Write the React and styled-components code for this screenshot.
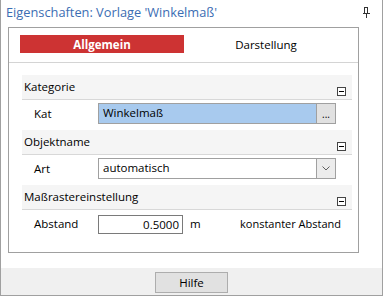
import React from "react";
import styled, { createGlobalStyle } from "styled-components";

const Global = createGlobalStyle`
  html, body { margin: 0; padding: 0; background: #ffffff; }
  body { font-family: "Segoe UI", "Open Sans", "Noto Sans", sans-serif; font-size: 11px; color: #000; }
`;

const Window = styled.div`
  box-sizing: border-box;
  width: 383px;
  height: 296px;
  border: 1px solid #a0a0a0;
  border-top: none;
  display: flex;
  flex-direction: column;
  background: #fff;
`;

const TitleBar = styled.div`
  height: 27px;
  display: flex;
  align-items: flex-start;
  justify-content: space-between;
  padding: 0 12px 0 5px;
`;

const Title = styled.div`
  color: #3b6db3;
  font-size: 12.8px;
  line-height: 16px;
  margin-top: 4px;
`;

const Pin = styled.svg`
  margin-top: 7px;
`;

const Body = styled.div`
  flex: 1;
  padding: 0 23px 15px 7px;
  display: flex;
`;

const Panel = styled.div`
  flex: 1;
  border: 1px solid #a0a0a0;
  display: flex;
  flex-direction: column;
`;

const Tabs = styled.div`
  display: flex;
  padding: 7px 0 0 11px;
  height: 27px;
  border-bottom: 1px solid #d4d4d4;
  box-sizing: content-box;
`;

const Tab = styled.div`
  width: 164px;
  height: 18px;
  display: flex;
  align-items: center;
  justify-content: center;
  background: ${p => (p.$active ? "#cd3333" : "transparent")};
  color: ${p => (p.$active ? "#fff" : "#000")};
  font-weight: ${p => (p.$active ? "700" : "400")};
  font-size: 11.5px;
`;

const Content = styled.div`
  padding: 12px 6px 0 13px;
  display: flex;
  flex-direction: column;
`;

const Header = styled.div`
  height: 22px;
  background: #f5f5f5;
  border-bottom: 1px solid #d8d8d8;
  display: flex;
  align-items: flex-end;
  justify-content: space-between;
  padding: 0 6px 2px 2px;
  box-sizing: content-box;
  font-size: 11.5px;
  line-height: 16px;
`;

const HeaderText = styled.span`
  margin-bottom: 2px;
`;

const Collapse = styled.div`
  width: 7px;
  height: 7px;
  border: 1px solid #444;
  background: #fff;
  position: relative;
  margin-bottom: 1px;
  &::after {
    content: "";
    position: absolute;
    left: 1px;
    right: 1px;
    top: 3px;
    height: 1px;
    background: #000;
  }
`;

const Row = styled.div`
  height: 30px;
  display: flex;
  align-items: flex-start;
  padding-top: 3px;
  box-sizing: border-box;
`;

const Label = styled.div`
  width: 64px;
  padding-left: 12px;
  line-height: 21px;
  font-size: 11.5px;
`;

const Field = styled.div`
  width: 238px;
  height: 21px;
  box-sizing: border-box;
  border: 1px solid #a0a0a0;
  display: flex;
  background: ${p => p.$bg || "#fff"};
`;

const FieldText = styled.div`
  flex: 1;
  padding-left: 4px;
  line-height: 18px;
  font-size: 11.5px;
`;

const SideButton = styled.div`
  width: 18px;
  border-left: 1px solid #a0a0a0;
  background: ${p => p.$bg || "#e1e1e1"};
  display: flex;
  align-items: center;
  justify-content: center;
  font-size: 10px;
  line-height: 18px;
`;

const NumInput = styled.div`
  width: 85px;
  height: 19px;
  box-sizing: border-box;
  border: 1px solid #7a7a7a;
  text-align: right;
  padding-right: 3px;
  line-height: 17px;
  margin-top: 2px;
  font-size: 11.5px;
`;

const Unit = styled.div`
  margin-left: 7px;
  width: 50px;
  line-height: 22px;
  font-size: 11.5px;
`;

const Note = styled.div`
  line-height: 22px;
  font-size: 11px;
`;

const Footer = styled.div`
  height: 27px;
  background: #f0f0f0;
  display: flex;
  justify-content: center;
  align-items: flex-start;
  padding-top: 4px;
  box-sizing: border-box;
`;

const Button = styled.div`
  width: 73px;
  height: 21px;
  box-sizing: border-box;
  border: 1px solid #adadad;
  background: #e1e1e1;
  display: flex;
  align-items: center;
  justify-content: center;
  font-size: 11.5px;
`;

const Section = ({ title }) => (
  <Header>
    <HeaderText>{title}</HeaderText>
    <Collapse />
  </Header>
);

export default function App() {
  return (
    <>
      <Global />
      <Window>
        <TitleBar>
          <Title>Eigenschaften: Vorlage 'Winkelmaß'</Title>
          <Pin width="7" height="11" viewBox="0 0 7 11">
            <rect x="0" y="6" width="7" height="1" fill="#333" />
            <rect x="1" y="0" width="1" height="6" fill="#333" />
            <rect x="4" y="0" width="1" height="6" fill="#333" />
            <rect x="1" y="0" width="4" height="1" fill="#333" />
            <rect x="3" y="7" width="1" height="4" fill="#333" />
          </Pin>
        </TitleBar>
        <Body>
          <Panel>
            <Tabs>
              <Tab $active>Allgemein</Tab>
              <Tab>Darstellung</Tab>
            </Tabs>
            <Content>
              <Section title="Kategorie" />
              <Row>
                <Label>Kat</Label>
                <Field $bg="#a8caee">
                  <FieldText>Winkelmaß</FieldText>
                  <SideButton>...</SideButton>
                </Field>
              </Row>
              <Section title="Objektname" />
              <Row>
                <Label>Art</Label>
                <Field>
                  <FieldText>automatisch</FieldText>
                  <SideButton $bg="#ececec">
                    <svg width="8" height="5" viewBox="0 0 8 5">
                      <path d="M0.5 0.5 L4 4 L7.5 0.5" stroke="#606060" fill="none" strokeWidth="1" />
                    </svg>
                  </SideButton>
                </Field>
              </Row>
              <Section title="Maßrastereinstellung" />
              <Row>
                <Label>Abstand</Label>
                <NumInput>0.5000</NumInput>
                <Unit>m</Unit>
                <Note>konstanter Abstand</Note>
              </Row>
            </Content>
          </Panel>
        </Body>
        <Footer>
          <Button>Hilfe</Button>
        </Footer>
      </Window>
    </>
  );
}
